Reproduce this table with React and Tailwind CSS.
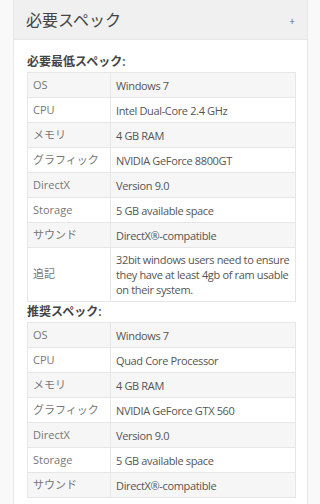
import React from "react";

const minSpecs = [
  ["OS", "Windows 7"],
  ["CPU", "Intel Dual-Core 2.4 GHz"],
  ["メモリ", "4 GB RAM"],
  ["グラフィック", "NVIDIA GeForce 8800GT"],
  ["DirectX", "Version 9.0"],
  ["Storage", "5 GB available space"],
  ["サウンド", "DirectX®-compatible"],
  [
    "追記",
    "32bit windows users need to ensure they have at least 4gb of ram usable on their system.",
  ],
];

const recSpecs = [
  ["OS", "Windows 7"],
  ["CPU", "Quad Core Processor"],
  ["メモリ", "4 GB RAM"],
  ["グラフィック", "NVIDIA GeForce GTX 560"],
  ["DirectX", "Version 9.0"],
  ["Storage", "5 GB available space"],
  ["サウンド", "DirectX®-compatible"],
];

const SpecTable = ({ rows }) => (
  <table className="w-[269px] border-collapse table-fixed">
    <tbody>
      {rows.map(([label, value], i) => (
        <tr key={label} className={i % 2 === 0 ? "bg-[#f6f6f6]" : "bg-white"}>
          <td className="w-[83px] border border-[#e6e6e6] px-[5px] h-[25px] text-[#777] align-middle">
            {label}
          </td>
          <td className="border border-[#e6e6e6] pl-[5px] pr-[3px] py-[4px] h-[25px] text-[#555] leading-[15px] align-middle tracking-[-0.35px]">
            {value}
          </td>
        </tr>
      ))}
    </tbody>
  </table>
);

const App = () => {
  return (
    <div
      className="w-[320px] h-[504px] overflow-hidden bg-[#f9f9f9] pl-[13px] text-[11px]"
      style={{ fontFamily: '"Open Sans", "Noto Sans CJK JP", sans-serif' }}
    >
      <div className="w-[295px] border-x border-[#e8e8e8] bg-white">
        <div className="h-[40px] bg-[#f0f0f0] border-b border-[#e8e8e8] flex items-center justify-between pl-[12px] pr-[12px]">
          <h2 className="text-[16px] text-[#444]">必要スペック</h2>
          <span className="text-[10px] text-[#666] mt-[4px]">+</span>
        </div>
        <div className="pl-[13px] pt-[12px] pb-[10px]">
          <h3 className="h-[20px] flex items-center font-semibold text-[12px] text-[#444]">
            必要最低スペック:
          </h3>
          <SpecTable rows={minSpecs} />
          <h3 className="h-[20px] flex items-center font-semibold text-[12px] text-[#444]">
            推奨スペック:
          </h3>
          <SpecTable rows={recSpecs} />
        </div>
      </div>
    </div>
  );
};

export default App;
